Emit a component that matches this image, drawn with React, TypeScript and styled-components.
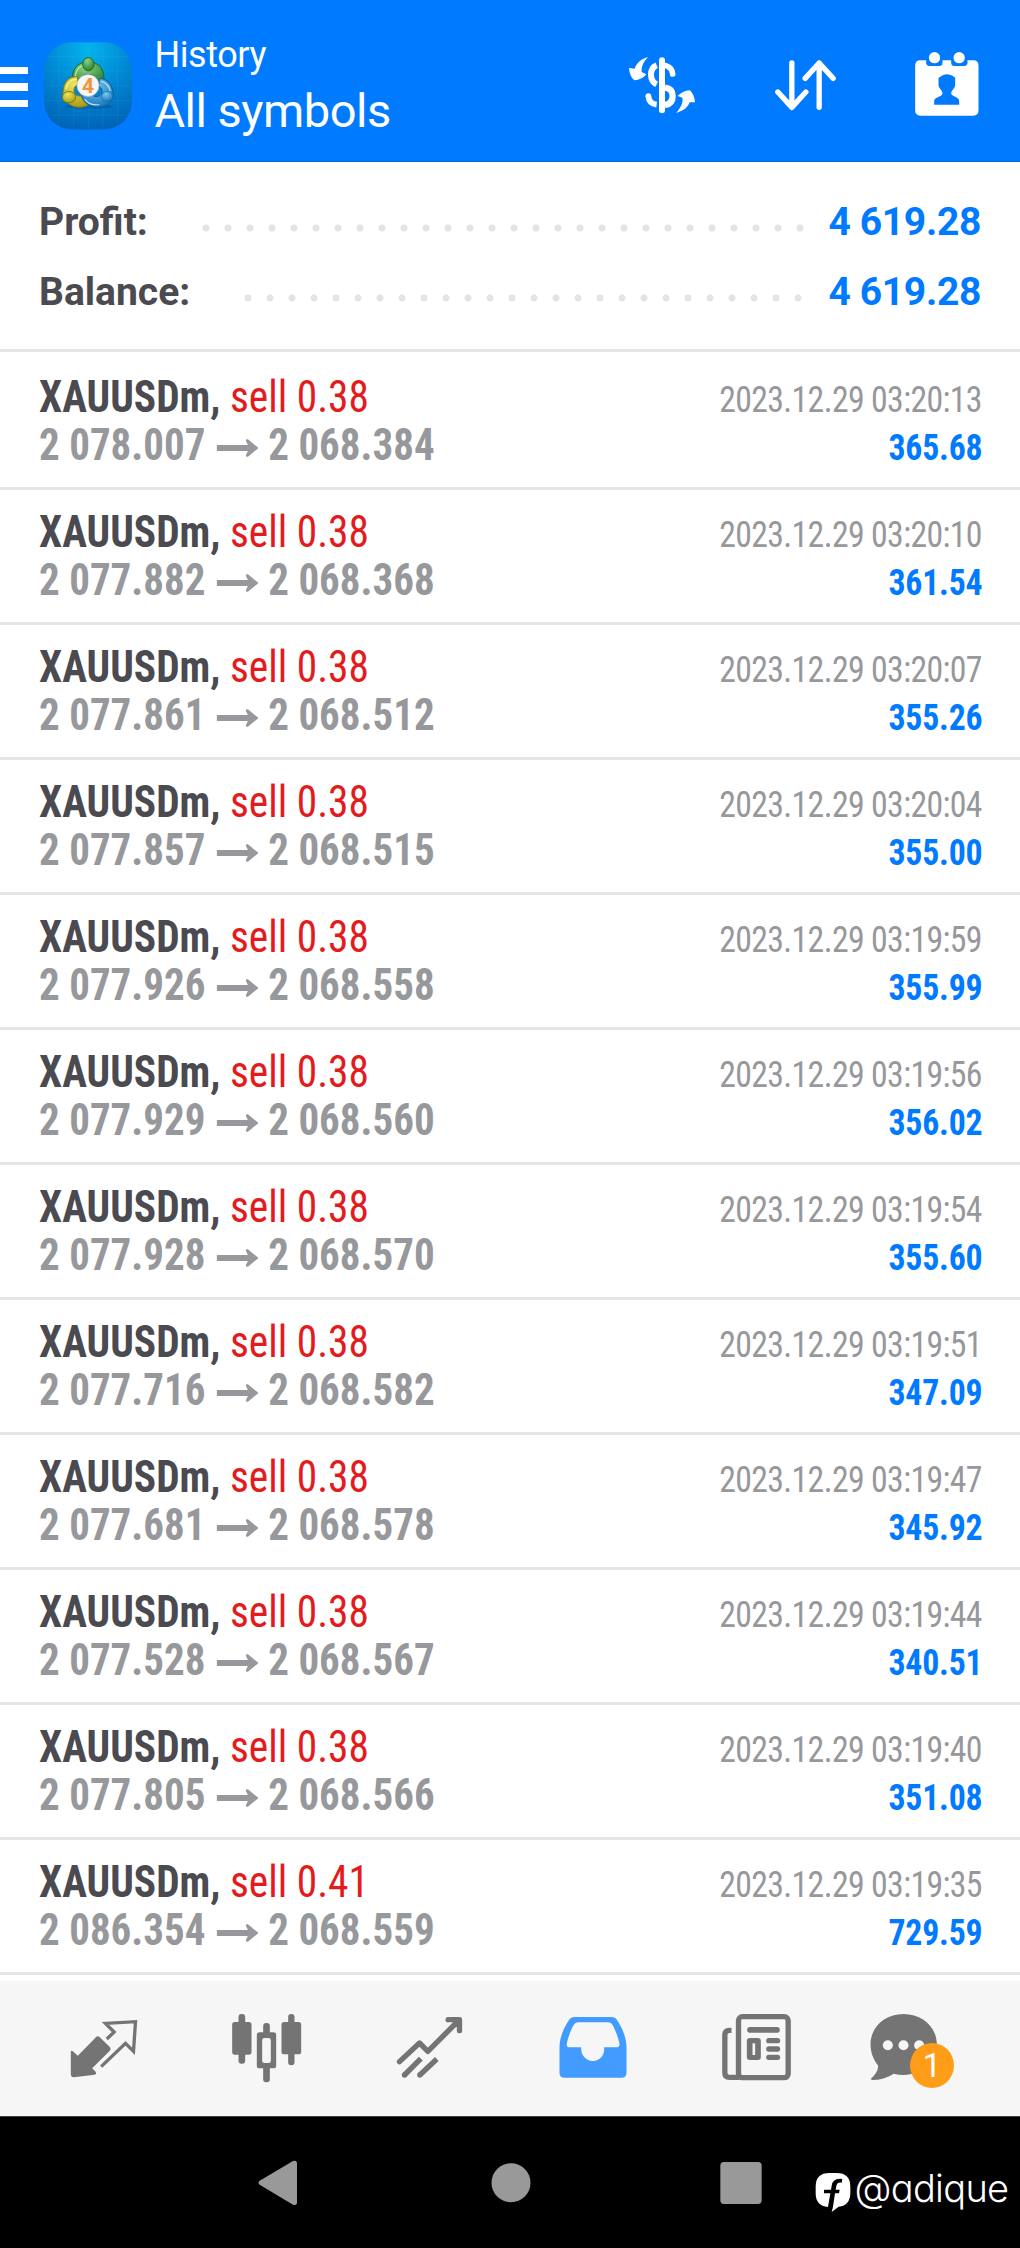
import React from "react";
import styled, { createGlobalStyle } from "styled-components";

const Global = createGlobalStyle`
  * { box-sizing: border-box; }
  body { margin: 0; background: #fff; }
`;

const Screen = styled.main`
  width: 1020px;
  height: 2248px;
  overflow: hidden;
  display: flex;
  flex-direction: column;
  background: #fff;
  font-family: Roboto, "Liberation Sans", sans-serif;
  white-space: nowrap;
`;

const Header = styled.header`
  height: 162px;
  flex: none;
  display: flex;
  align-items: flex-start;
  background: #007aff;
  border-bottom: 1px solid #0069dc;
`;

const MenuButton = styled.div`
  width: 28px;
  margin: 67px 16px 0 0;
  display: grid;
  gap: 9px;
`;

const MenuBar = styled.span`
  height: 7.4px;
  background: #fff;
`;

const Logo = styled.svg`
  width: 88px;
  height: 88px;
  margin-top: 41.5px;
`;

const Titles = styled.div`
  flex: 1;
  margin: 31px 0 0 22.4px;
  color: #fff;
`;

const Caption = styled.div`
  font-size: 36px;
  line-height: 48px;
  letter-spacing: -0.4px;
`;

const Title = styled.div`
  font-size: 47px;
  line-height: 64px;
  letter-spacing: -0.5px;
`;

const Actions = styled.div`
  display: flex;
  margin: 50px 41px 0 0;
`;

const ActionIcon = styled.svg<{ $w: number; $gap?: number }>`
  width: ${(p) => p.$w}px;
  height: 70px;
  margin-left: ${(p) => p.$gap ?? 0}px;
  fill: #fff;
`;

const Summary = styled.section`
  height: 190px;
  flex: none;
  padding: 25px 39px 0;
  border-bottom: 3px solid #e5e5e6;
`;

const SummaryRow = styled.div`
  height: 70px;
  display: flex;
  align-items: center;
  font-size: 39px;
  font-weight: 700;
  color: #4a4a50;
`;

const Leader = styled.div`
  flex: 1;
  height: 8px;
  margin: 12px 17px 0 47px;
  background: radial-gradient(circle at center, #e4e4e5 3.2px, transparent 3.9px) 0 0 / 22px 8px repeat-x;
`;

const Amount = styled.span`
  letter-spacing: -0.33px;
  color: #007aff;
`;

const DealList = styled.ul`
  list-style: none;
  margin: 0;
  padding: 3px 0 0;
  height: 1629px;
  flex: none;
`;

const DealRow = styled.li`
  height: 135px;
  padding: 18px 38px 0 39px;
  display: flex;
  justify-content: space-between;
  border-bottom: 3px solid #e5e5e6;
  font-family: "Roboto Condensed", Roboto, sans-serif;
  font-stretch: 75%;
`;

const DealSide = styled.div<{ $right?: boolean }>`
  display: flex;
  flex-direction: column;
  align-items: ${(p) => (p.$right ? "flex-end" : "flex-start")};
  padding-top: ${(p) => (p.$right ? 2 : 0)}px;
  line-height: 48px;
`;

const Narrow = styled.div<{ $scale: number; $from: "left" | "right" }>`
  transform: scaleX(${(p) => p.$scale});
  transform-origin: ${(p) => p.$from} center;
`;

const SymbolName = styled(Narrow)`
  font-size: 45px;
  font-weight: 700;
  color: #4a4a50;
`;

const Side = styled.span`
  font-weight: 400;
  color: #e31b1c;
`;

const Prices = styled(Narrow)`
  font-size: 45px;
  font-weight: 700;
  color: #97989c;
  display: flex;
`;

const Arrow = styled.svg`
  width: 46px;
  height: 18px;
  margin: 18px 10.7px 0 12.3px;
  fill: #97989c;
`;

const Time = styled(Narrow)`
  font-size: 37.5px;
  letter-spacing: -0.7px;
  color: #97989c;
`;

const Profit = styled(Narrow)`
  font-size: 37.5px;
  font-weight: 700;
  letter-spacing: -0.2px;
  color: #007aff;
`;

const TabBar = styled.nav`
  height: 135px;
  flex: none;
  padding: 0 21px;
  display: flex;
  background: #f6f6f6;
`;

const Tab = styled.div`
  width: 163px;
  display: flex;
  justify-content: center;
  position: relative;
`;

const TabIcon = styled.svg`
  width: 100px;
  height: 135px;
  fill: #747474;
`;

const Badge = styled.span`
  position: absolute;
  left: 74px;
  top: 62px;
  width: 44px;
  height: 45px;
  border-radius: 50%;
  background: #ff9d19;
  color: #fff;
  font-size: 33px;
  line-height: 46px;
  text-align: center;
`;

const SystemBar = styled.footer`
  flex: 1;
  display: flex;
  align-items: flex-start;
  background: #000;
  border-top: 1px solid #3d4242;
`;

const SystemIcon = styled.svg<{ $w: number; $gap: number }>`
  width: ${(p) => p.$w}px;
  height: 130px;
  margin-left: ${(p) => p.$gap}px;
  flex: none;
  fill: #999;
`;

const Watermark = styled.span`
  margin: 45px 0 0 3.5px;
  color: #fff;
  font-family: Inter, "Noto Sans", sans-serif;
  font-weight: 350;
  font-feature-settings: "cv11";
  font-size: 38px;
  line-height: 52px;
  letter-spacing: -0.7px;
`;

type Deal = [volume: string, open: string, close: string, time: string, profit: string];

const deals: Deal[] = [
  ["0.38", "2 078.007", "2 068.384", "03:20:13", "365.68"],
  ["0.38", "2 077.882", "2 068.368", "03:20:10", "361.54"],
  ["0.38", "2 077.861", "2 068.512", "03:20:07", "355.26"],
  ["0.38", "2 077.857", "2 068.515", "03:20:04", "355.00"],
  ["0.38", "2 077.926", "2 068.558", "03:19:59", "355.99"],
  ["0.38", "2 077.929", "2 068.560", "03:19:56", "356.02"],
  ["0.38", "2 077.928", "2 068.570", "03:19:54", "355.60"],
  ["0.38", "2 077.716", "2 068.582", "03:19:51", "347.09"],
  ["0.38", "2 077.681", "2 068.578", "03:19:47", "345.92"],
  ["0.38", "2 077.528", "2 068.567", "03:19:44", "340.51"],
  ["0.38", "2 077.805", "2 068.566", "03:19:40", "351.08"],
  ["0.41", "2 086.354", "2 068.559", "03:19:35", "729.59"],
];

const AppLogo = () => (
  <Logo viewBox="132 124.5 264 264">
    <defs>
      <radialGradient id="bg" cx="0.5" cy="0.08" r="0.95">
        <stop offset="0" stopColor="#04b4ec" />
        <stop offset="0.5" stopColor="#0088d4" />
        <stop offset="1" stopColor="#0062b4" />
      </radialGradient>
      <radialGradient id="gr" cx="0.4" cy="0.25" r="0.8">
        <stop offset="0" stopColor="#8fd08a" />
        <stop offset="1" stopColor="#1f7f28" />
      </radialGradient>
      <radialGradient id="ye" cx="0.4" cy="0.25" r="0.8">
        <stop offset="0" stopColor="#eee65a" />
        <stop offset="1" stopColor="#a89a14" />
      </radialGradient>
      <radialGradient id="bl" cx="0.4" cy="0.25" r="0.8">
        <stop offset="0" stopColor="#7cc8f0" />
        <stop offset="1" stopColor="#1673b8" />
      </radialGradient>
    </defs>
    <rect x="132" y="125" width="264" height="262" rx="84" fill="url(#bg)" />
    <path d="M177 136V376M221 126V386M265 126V386M309 126V386M353 136V376M142 168H386M133 212H395M133 256H395M133 300H395M142 344H386" stroke="#5cc4f0" strokeOpacity=".16" strokeWidth="2" fill="none" />
    <ellipse cx="266" cy="318" rx="74" ry="7" fill="#003c78" opacity=".3" />
    <path d="M218 250C212 206 232 184 265 184S318 208 310 250L288 256C294 232 286 222 264 222S240 232 242 250Z" fill="url(#gr)" stroke="#1b6a2c" strokeWidth="3" />
    <path d="M226 240C224 210 238 193 262 193" fill="none" stroke="#b7e6a8" strokeWidth="4" />
    <path d="M232 228C204 228 190 246 189 276C192 304 214 322 242 320C256 319 266 314 272 308L246 284C234 290 222 284 222 270C222 258 228 254 236 254Z" fill="url(#ye)" stroke="#857c18" strokeWidth="3" />
    <path d="M198 266C202 246 212 237 230 236" fill="none" stroke="#fbf59a" strokeWidth="4" />
    <path d="M298 234C326 234 340 256 340 288C334 312 312 321 292 320C266 318 250 306 244 286L276 282C284 292 302 290 306 276C308 264 302 260 296 258Z" fill="url(#bl)" stroke="#135d9a" strokeWidth="3" />
    <path d="M254 296C264 310 282 315 298 312M304 242C320 248 328 258 331 272" fill="none" stroke="#b5e4fb" strokeWidth="3.5" />
    <ellipse cx="265" cy="191" rx="17" ry="20" fill="url(#gr)" stroke="#1f6d2a" strokeWidth="3" />
    <ellipse cx="207" cy="290" rx="20" ry="17" fill="url(#ye)" stroke="#847817" strokeWidth="3" />
    <ellipse cx="321" cy="288" rx="17" ry="15" fill="url(#bl)" stroke="#176ca8" strokeWidth="2" />
    <circle cx="264" cy="255" r="33" fill="#f7f7f9" stroke="#b7bcc4" strokeWidth="2" />
    <text x="264" y="277" textAnchor="middle" fontFamily="Roboto, sans-serif" fontWeight="700" fontSize="63" fill="#f59434">4</text>
  </Logo>
);

const Exchange = () => (
  <ActionIcon $w={66} viewBox="87 60 198 210">
    <path d="M144 82C125 86 110 98 104 116L87 114C88 130 93 142 103 151C118 150 130 144 139 133L125 126C124 110 130 96 144 82Z" />
    <path d="M228 249C250 243 264 232 269 217L285 217C284 202 279 190 270 181C254 182 243 188 233 198L247 203C250 218 242 234 228 249Z" />
    <rect x="177" y="82" width="18" height="168" rx="9" />
    <path d="M170 106C157 112 153 120 153 134C153 148 158 157 170 163" fill="none" stroke="#fff" strokeWidth="18" />
    <path d="M198 107C210 111 217 119 218 132" fill="none" stroke="#fff" strokeWidth="17" strokeLinecap="round" />
    <path d="M195 173C211 175 218 184 218 198C218 213 211 223 195 225" fill="none" stroke="#fff" strokeWidth="19" />
    <path d="M145 198C146 212 154 222 170 224" fill="none" stroke="#fff" strokeWidth="17" />
    <circle cx="145" cy="198" r="8.5" />
  </ActionIcon>
);

const Sort = () => (
  <ActionIcon $w={61} $gap={79.5} viewBox="523.5 60 183 210">
    <path d="M574 99V232M532 186L574 232L616 186M656 232V99M614 145L656 99L698 145" fill="none" stroke="#fff" strokeWidth="16" strokeLinecap="round" strokeLinejoin="round" />
  </ActionIcon>
);

const Calendar = () => (
  <ActionIcon $w={64} $gap={79.5} viewBox="944.5 60 192 210">
    <path d="M961 91H978V99Q979 108 988 108H1018Q1027 108 1027 99V91H1053V99Q1054 108 1062 108H1092Q1101 108 1102 99V91H1119Q1135 91 1135 107V241Q1135 257 1119 257H961Q945 257 945 241V107Q945 91 961 91Z" />
    <circle cx="1003" cy="83" r="17" />
    <circle cx="1077" cy="83" r="17" />
    <path d="M1015 144C1021 141 1027 134 1040 133C1053 134 1059 138 1065 143V164C1065 176 1053 180 1053 190C1053 201 1077 199 1077 214V224H1002V214C1002 200 1027 201 1027 190C1027 180 1015 176 1015 164Z" fill="#007aff" />
  </ActionIcon>
);

export default function App() {
  return (
    <>
      <Global />
      <Screen>
        <Header>
          <MenuButton>
            <MenuBar />
            <MenuBar />
            <MenuBar />
          </MenuButton>
          <AppLogo />
          <Titles>
            <Caption>History</Caption>
            <Title>All symbols</Title>
          </Titles>
          <Actions>
            <Exchange />
            <Sort />
            <Calendar />
          </Actions>
        </Header>

        <Summary>
          {["Profit:", "Balance:"].map((label) => (
            <SummaryRow key={label}>
              <span>{label}</span>
              <Leader />
              <Amount>4 619.28</Amount>
            </SummaryRow>
          ))}
        </Summary>

        <DealList>
          {deals.map(([volume, open, close, time, profit]) => (
            <DealRow key={time}>
              <DealSide>
                <SymbolName $scale={0.92} $from="left">
                  XAUUSDm, <Side>sell {volume}</Side>
                </SymbolName>
                <Prices $scale={0.911} $from="left">
                  <span>{open}</span>
                  <Arrow viewBox="0 0 126 54" preserveAspectRatio="none">
                    <path d="M0 18H94L88 6Q87 -1 94 1L126 27L94 53Q87 55 88 48L94 36H0Z" />
                  </Arrow>
                  <span>{close}</span>
                </Prices>
              </DealSide>
              <DealSide $right>
                <Time $scale={0.9} $from="right">
                  2023.12.29 {time}
                </Time>
                <Profit $scale={0.9} $from="right">
                  {profit}
                </Profit>
              </DealSide>
            </DealRow>
          ))}
        </DealList>

        <TabBar>
          <Tab>
            <TabIcon viewBox="67.5 33 300 405">
              <path d="M121 244Q123 240 127 244L142 257L197 201Q202 196 207 201L238 231Q243 237 238 242L185 295L196 306Q199 312 193 314L130 322Q121 322 121 313Z" />
              <path d="M229 207L251 186L225 160L315 155L309 244L285 220L212 290" fill="none" stroke="#747474" strokeWidth="10" />
            </TabIcon>
          </Tab>
          <Tab>
            <TabIcon viewBox="556.5 33 300 405">
              <rect x="605" y="156" width="58" height="98" rx="8" />
              <rect x="624" y="132" width="20" height="149" rx="9" />
              <rect x="753" y="156" width="59" height="97" rx="8" />
              <rect x="773" y="132" width="19" height="154" rx="9" />
              <rect x="698" y="159" width="20" height="40" rx="9" />
              <rect x="698" y="280" width="20" height="57" rx="9" />
              <rect x="679" y="187" width="58" height="108" rx="8" />
              <rect x="695" y="204" width="26" height="75" rx="7" fill="#f6f6f6" />
            </TabIcon>
          </Tab>
          <Tab>
            <TabIcon viewBox="55.5 33 300 405">
              <path d="M117 275L177 219L202 244L296 150M263 149H297V182" fill="none" stroke="#747474" strokeWidth="16" strokeLinecap="round" strokeLinejoin="round" />
              <path d="M181 266L132 315M229 267L178 315" fill="none" stroke="#747474" strokeWidth="16" />
              <circle cx="132" cy="315" r="8" />
              <circle cx="178" cy="315" r="8" />
            </TabIcon>
          </Tab>
          <Tab>
            <TabIcon viewBox="544.5 33 300 405">
              <path d="M643 141H752Q764 141 770 151C785 174 798 202 798 232V308Q798 323 783 323H612Q597 323 597 308V232C597 202 610 174 625 151Q631 141 643 141Z" fill="#429bff" />
              <path d="M653 157H742Q752 157 757 166C765 182 773 201 777 221Q778 232 769 232H731C733 255 718 273 697 273S660 255 662 232H627Q617 232 619 221C623 200 631 181 639 166Q644 157 653 157Z" fill="#f6f6f6" />
            </TabIcon>
          </Tab>
          <Tab>
            <TabIcon viewBox="43.5 33 300 405">
              <rect x="144" y="140" width="149" height="183" rx="12" fill="none" stroke="#747474" strokeWidth="16" />
              <path d="M123 181H116Q103 182 103 195V309Q103 322 117 322H146" fill="none" stroke="#747474" strokeWidth="16" />
              <rect x="170" y="171" width="98" height="17" rx="8" />
              <rect x="227" y="204" width="42" height="16" rx="8" />
              <rect x="227" y="229" width="42" height="16" rx="8" />
              <rect x="227" y="254" width="42" height="16" rx="8" />
              <rect x="169" y="204" width="42" height="66" rx="9" />
              <rect x="186" y="220" width="8" height="35" fill="#f6f6f6" />
            </TabIcon>
          </Tab>
          <Tab>
            <TabIcon viewBox="532.5 33 300 405">
              <path d="M639 132C696 132 739 172 739 223S696 315 639 315Q624 315 610 311C590 323 568 330 545 330Q539 329 543 324C554 315 563 301 563 287C548 268 540 246 540 223C540 172 582 132 639 132Z" />
              <circle cx="592" cy="226" r="15" fill="#f6f6f6" />
              <circle cx="639" cy="226" r="15" fill="#f6f6f6" />
              <circle cx="686" cy="226" r="15" fill="#f6f6f6" />
            </TabIcon>
            <Badge>1</Badge>
          </Tab>
        </TabBar>

        <SystemBar>
          <SystemIcon $w={40} $gap={258} viewBox="114 21 120 390">
            <path d="M219 153Q231 149 231 160V277Q231 288 219 284L119 224Q112 218 119 212Z" />
          </SystemIcon>
          <SystemIcon $w={40} $gap={192.5} viewBox="811 21 120 390">
            <circle cx="871" cy="218" r="58.5" />
          </SystemIcon>
          <SystemIcon $w={42} $gap={189} viewBox="119 21 126 390">
            <rect x="120" y="156" width="124" height="126" rx="11" />
          </SystemIcon>
          <SystemIcon $w={36} $gap={53.5} viewBox="405 21 108 390">
            <path d="M448 189H470Q511 189 511 230V248Q511 286 476 290L455 306L459 290L465 250H477L479 239H467L469 228Q471 216 485 218L487 207Q459 203 455 227L453 239H432V250H451L444 291Q407 288 407 250V230Q407 189 448 189Z" fill="#fff" />
          </SystemIcon>
          <Watermark>@adique</Watermark>
        </SystemBar>
      </Screen>
    </>
  );
}
